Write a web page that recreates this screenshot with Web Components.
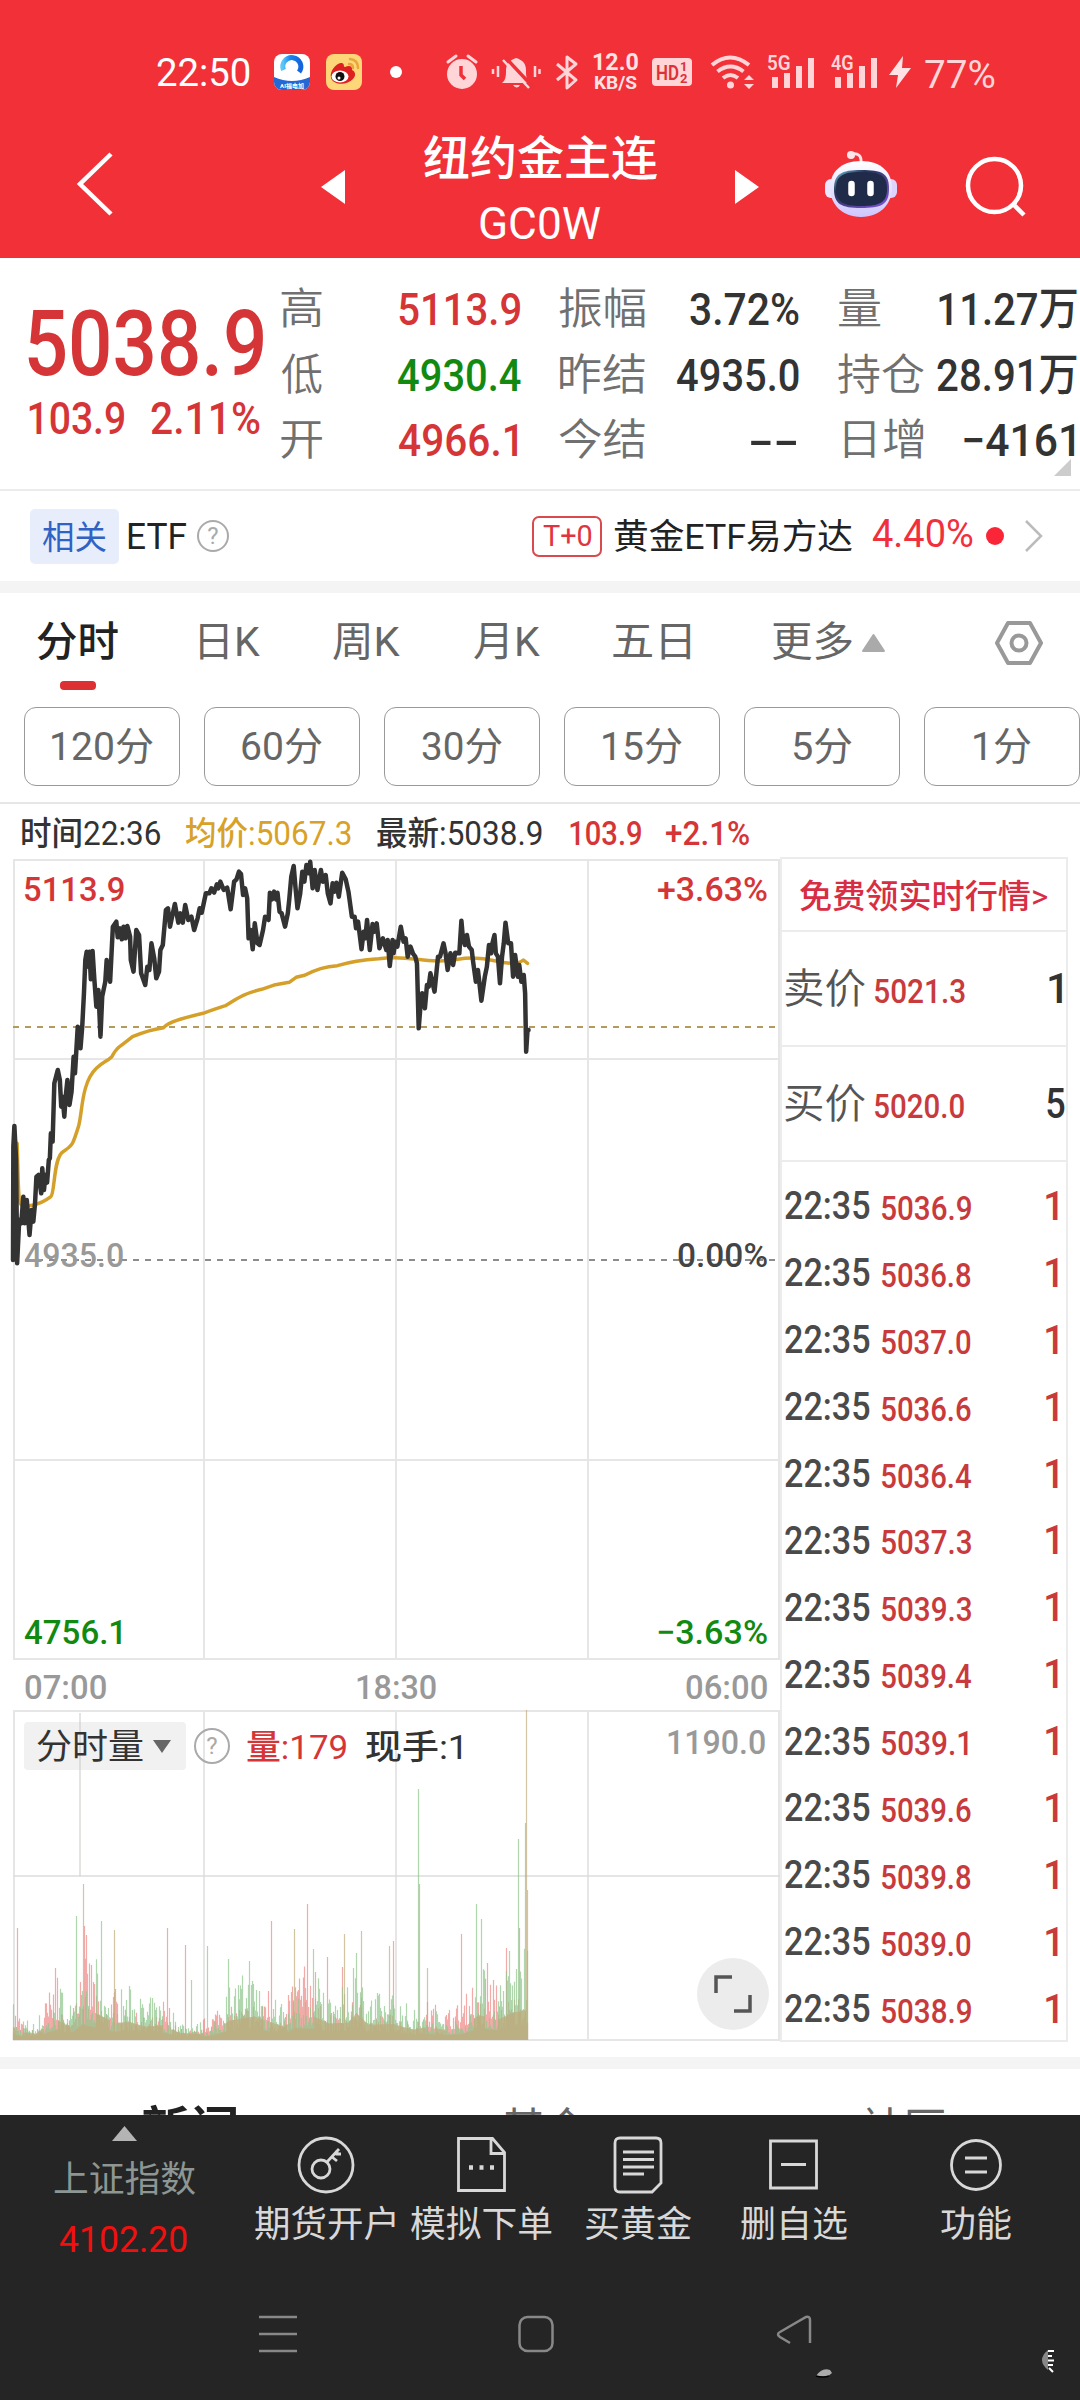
<!DOCTYPE html>
<html lang="zh-CN">
<head>
<meta charset="utf-8">
<title>纽约金主连</title>
<style>
  body {
    margin: 0;
    width: 1080px;
    height: 2400px;
    overflow: hidden;
    background: #fff;
    color: #333;
    font-family: Roboto, "Noto Sans CJK SC", sans-serif;
  }
</style>
</head>
<body>
<quote-page></quote-page>

<script>
const FONT = 'Roboto, "Noto Sans CJK SC", sans-serif';
const pen = document.createElement("canvas").getContext("2d");

// Text condensed or widened to an exact width, like the DIN-style numerals of the app.
class FitText extends HTMLElement {
  connectedCallback() {
    const width = Number(this.getAttribute("w"));
    const size = Number(this.getAttribute("size") || 40);
    const weight = this.getAttribute("weight") || 400;
    const shadow = this.attachShadow({ mode: "open" });

    pen.font = `${weight} ${size}px ${FONT}`;
    const m = pen.measureText(this.textContent);
    const scale = width / (m.actualBoundingBoxLeft + m.actualBoundingBoxRight);

    shadow.innerHTML = `
      <style>
        :host {
          display: block;
          flex: none;
          width: ${width}px;
          height: ${size}px;
          line-height: ${size}px;
          font-size: ${size}px;
          font-weight: ${weight};
          white-space: nowrap;
        }
        span {
          display: inline-block;
          transform-origin: 0 50%;
          transform: translateX(${m.actualBoundingBoxLeft * scale}px) scaleX(${scale});
        }
      </style>
      <span><slot></slot></span>
    `;
  }
}
customElements.define("fit-text", FitText);

// t(text, width, size, left gap, colour, weight, extra css)
const t = (text, w, size, gap = 0, color = "inherit", weight = 400, css = "") =>
  `<fit-text w="${w}" size="${size}" weight="${weight}" style="margin-left:${gap}px;color:${color};${css}">${text}</fit-text>`;

// svg(width, height, left gap, content, attributes)
const svg = (w, h, gap, content, attrs = "") =>
  `<svg width="${w}" height="${h}" viewBox="0 0 ${w} ${h}" style="margin-left:${gap}px" fill="none" ${attrs}>${content}</svg>`;

const define = (name, css, html) =>
  customElements.define(name, class extends HTMLElement {
    connectedCallback() {
      this.attachShadow({ mode: "open" }).innerHTML = `
        <style>
          :host, * { box-sizing: border-box; }
          svg { display: block; flex: none; overflow: visible; }
          .row { display: flex; align-items: center; }
          ${css}
        </style>
        ${html}`;
    }
  });

const RED = "#d63537";
const GREEN = "#128a12";
const INK = "#333";
const GREY = "#666";

const bars = `<path d="M0 34V23h6v11zM12 34V19h6v15zM24 34V12h6v22zM36 34V4h6v30z" fill="#ffd5d8"/>`;

define("status-bar", `
  :host { display: flex; align-items: center; height: 144px; color: #fff; }
  .speed { margin-left: 15px; width: 45px; padding-top: 1px; }
  .net { display: grid; }
  .net > * { grid-area: 1 / 1; }
`, `
  ${t("22:50", 93, 38, 157, "#fff", 400, "margin-top:2px")}
  ${svg(36, 36, 24, `
    <defs><clipPath id="a"><rect width="36" height="36" rx="8"/></clipPath>
    <linearGradient id="g"><stop stop-color="#5cc8f8"/><stop offset=".4" stop-color="#1a86f0"/><stop offset="1" stop-color="#1464dd"/></linearGradient></defs>
    <g clip-path="url(#a)"><rect width="36" height="36" fill="#fff"/>
    <path d="M0 23Q18 31 36 23V36H0z" fill="#2468d6"/></g>
    <path d="M9.500 16A9 9 0 1 1 25 18" stroke="url(#g)" stroke-width="5"/>
    <text x="18" y="34" font-size="6" font-weight="700" fill="#fff" text-anchor="middle">AI福电加</text>`)}
  ${svg(36, 36, 16, `
    <rect width="36" height="36" rx="8" fill="#fcd678"/>
    <path d="M5 24C3 16 12 8 16 9c3 1 1 4 3 4 4-2 8-1 7 3 4 2 4 6 1 9-6 7-20 6-22-1z" fill="#df2020"/>
    <ellipse cx="14" cy="22.500" rx="8.500" ry="6" fill="#fff"/>
    <circle cx="14" cy="22.500" r="4.500" fill="#111"/><circle cx="13" cy="24" r="1.500" fill="#fff"/>
    <path d="M24 5q8 1 8 9M23 10q4 0 4 4" stroke="#e9a63a" stroke-width="2.500" stroke-linecap="round"/>`)}
  ${svg(12, 12, 28, `<circle cx="6" cy="6" r="6" fill="#fff"/>`)}
  ${svg(34, 36, 43, `
    <circle cx="17" cy="20" r="15" fill="#ffd5d8"/>
    <path d="M3 8l8-6M31 8l-8-6" stroke="#ffd5d8" stroke-width="3" stroke-linecap="round"/>
    <path d="M16 12v9l4 4" stroke="#ef3038" stroke-width="3.500"/>`)}
  ${svg(48, 34, 13, `
    <path d="M10 28c4-3 4-8 4-13 0-6 4-10 10-12 7 2 10 6 10 12 0 5 0 10 4 13zM21 30h7q-3 5-7 0z" fill="#ffd5d8"/>
    <path d="M13 2l29 31" stroke="#ef3038" stroke-width="3.500"/>
    <path d="M11 5l26 28M1 14v5M6 11v11M43 11v11M47.500 14v5" stroke="#ffd5d8" stroke-width="2.500"/>`)}
  ${svg(22, 34, 16, `<path d="M1 9l19 16-9 8V2l9 7L1 25" stroke="#ffd5d8" stroke-width="3" stroke-linejoin="round"/>`)}
  <div class="speed">
    ${t("12.0", 45, 24, 0, "#ffe3e4", 700, "height:20px;line-height:20px")}
    ${t("KB/S", 42, 18, 2, "#ffe3e4", 700, "height:21px;line-height:21px")}
  </div>
  ${svg(40, 28, 14, `
    <rect width="40" height="28" rx="4" fill="#ffd5d8"/>
    <text x="4" y="22" font-size="21" font-weight="600" fill="#dd3038" textLength="23" lengthAdjust="spacingAndGlyphs">HD</text>
    <text x="28" y="13" font-size="13" font-weight="700" fill="#dd3038">1</text>
    <text x="28" y="25" font-size="13" font-weight="700" fill="#dd3038">2</text>`)}
  ${svg(44, 34, 18, `
    <path d="M2 10q18-15 37 0M7.500 16.500q13-10 26 0M13 23q7.500-6 15 0" stroke="#ffd5d8" stroke-width="4"/>
    <circle cx="20.500" cy="30" r="3.500" fill="#ffd5d8"/><path d="M34 25l5-5 5 5zM34 29h10l-5 5z" fill="#ffd5d8"/>`)}
  <div class="net" style="margin-left:14px">${svg(46, 34, 0, `<g transform="translate(4 -1)">${bars}</g>`)}${t("5G", 22, 20, 0, "#ffd5d8", 600, "margin-top:-2px")}</div>
  <div class="net" style="margin-left:17px">${svg(46, 34, 0, `<g transform="translate(4 -1)">${bars}</g>`)}${t("4G", 22, 20, 0, "#ffd5d8", 600, "margin-top:-2px")}</div>
  ${svg(24, 34, 11, `<path d="M15 1L1 20h9L8 33 23 13h-9z" fill="#ffe3e4"/>`)}
  ${t("77%", 70, 38, 13, "#ffd5d8", 400, "margin-top:5px")}
`);

define("title-bar", `
  :host { display: flex; height: 114px; color: #fff; }
  .names { margin-left: 78px; width: 234px; display: flex; flex-direction: column; align-items: center; }
`, `
  ${svg(38, 64, 76, `<path d="M35 2L4 32l31 30" stroke="#fff" stroke-width="4.500"/>`, 'id="back"')}
  ${svg(24, 34, 207, `<path d="M24 0v34L0 17z" fill="#fff"/>`)}
  <div class="names">
    ${t("纽约金主连", 233, 47, 0, "#fff", 500, "margin-top:-9px")}
    ${t("GC0W", 121, 44, 0, "#fff", 400, "margin-top:20px")}
  </div>
  ${svg(24, 34, 78, `<path d="M0 0v34l24-17z" fill="#fff"/>`)}
  ${svg(72, 68, 66, `
    <defs>
      <linearGradient id="h" x2="0" y2="1"><stop stop-color="#fff"/><stop offset="1" stop-color="#cfc5ff"/></linearGradient>
      <linearGradient id="v" x2="1" y2="1"><stop stop-color="#75c9df"/><stop offset=".3" stop-color="#24345c"/><stop offset="1" stop-color="#8552dc"/></linearGradient>
    </defs>
    <path d="M26 4q11-2 10 9" stroke="#ffe4e8" stroke-width="3"/><circle cx="26" cy="5" r="4" fill="#ffe4e8"/>
    <rect y="29" width="14" height="19" rx="6" fill="#ebe6ff"/><rect x="58" y="29" width="14" height="19" rx="6" fill="#ddd5ff"/>
    <path d="M36 11c21 0 31 12 31 27S56 67 36 67 5 53 5 38s10-27 31-27z" fill="url(#h)"/>
    <path d="M36 20c21 0 28 3 28 19S56 58 36 58 9 54 9 39s7-19 27-19z" fill="url(#v)"/>
    <path d="M36 22c19 0 26 3 26 17S54 56 36 56 11 52 11 39s6-17 25-17z" fill="#202b49"/>
    <path d="M26.500 34v9M45.500 34v9" stroke="#fff" stroke-width="6.500" stroke-linecap="round"/>`, 'class="bot"')}
  ${svg(60, 60, 69, `<circle cx="28.500" cy="28.500" r="26.500" stroke="#fff" stroke-width="4.500"/><path d="M48 48l10 10" stroke="#fff" stroke-width="4.500"/>`, 'class="find"')}
  <style>
    svg { margin-top: 26px; }
    #back { margin-top: 8px; }
    .bot { margin-top: 6px; }
    .find { margin-top: 13px; }
  </style>
`);

const cell = (label, lw, value, vw, color = INK, inset = 0, tail = 0) =>
  `<div class="cell row" style="padding:0 ${tail}px 0 ${inset}px">${t(label, lw, 43, 0, "#707070", 350)}${t(value, vw, 45, 0, color, 500)}</div>`;

define("quote-summary", `
  :host { display: flex; height: 233px; border-bottom: 2px solid #ececec; }
  .price { width: 280px; padding: 42px 0 0 28px; }
  .change { margin-top: 6px; }
  .stats { display: grid; width: 800px; grid-template-columns: 241px 240px 240px; column-gap: 38px; grid-template-rows: repeat(3, 65.500px); padding-top: 19px; }
  .cell { justify-content: space-between; }
  .corner { margin: 201px 0 0 -26px; }
`, `
  <div class="price">
    ${t("5038.9", 235, 90, 0, RED, 500)}
    <div class="change row">${t("103.9", 95, 45, 1, RED, 500)}${t("2.11%", 109, 45, 27, RED, 500)}</div>
  </div>
  <div class="stats">
    ${cell("高", 41, "5113.9", 121, RED, 1, 1)}${cell("振幅", 86, "3.72%", 109)}${cell("量", 42, "11.27万", 138, INK, 2)}
    ${cell("低", 41, "4930.4", 123, GREEN, 1)}${cell("昨结", 85, "4935.0", 122, INK, 1)}${cell("持仓", 86, "28.91万", 140, INK, 1)}
    ${cell("开", 41, "4966.1", 118, RED, 1, 4)}${cell("今结", 86, "--", 47, INK, 0, 2)}${cell("日增", 79, "−4161", 110, INK, 7, 3)}
  </div>
  <div class="corner">${svg(17, 17, 0, `<path d="M17 0v17H0z" fill="#ccc"/>`)}</div>
`);

define("help-mark", `
  :host { display: grid; place-items: center; width: 32px; height: 32px; border: 2px solid #aaa; border-radius: 50%; color: #aaa; font-size: 24px; line-height: 1; flex: none; }
`, `<span>?</span>`);

define("related-etf", `
  :host { display: flex; align-items: center; height: 102px; border-bottom: 12px solid #f4f4f4; }
  .tag { margin-left: 30px; width: 89px; height: 55px; border-radius: 5px; background: #e7edfa; }
  .day { margin-left: 303px; width: 70px; height: 41px; border: 2px solid #d84a4e; border-radius: 7px; }
  help-mark { margin-left: 11px; }
`, `
  <div class="tag row">${t("相关", 64, 33, 12, "#2f62c4", 400, "margin-top:2px")}</div>
  ${t("ETF", 58, 36, 9, "#222", 400, "margin-top:2px")}
  <help-mark></help-mark>
  <div class="day row">${t("T+0", 49, 30, 9, "#e23340")}</div>
  ${t("黄金ETF易方达", 238, 35, 12, "#222", 400, "margin-top:3px")}
  ${t("4.40%", 101, 38, 20, "#f0303c", 400, "margin-top:-4px")}
  ${svg(18, 18, 13, `<circle cx="9" cy="9" r="9" fill="#fa2638"/>`)}
  ${svg(18, 32, 21, `<path d="M1 1l15 15L1 31" stroke="#bbb" stroke-width="2.500"/>`)}
`);

define("period-tabs", `
  :host { display: block; height: 211px; border-bottom: 2px solid #e6e6e6; }
  .tabs { height: 88px; padding-top: 11px; }
  .mark { width: 36px; height: 9px; margin-left: 60px; border-radius: 4px; background: #dc3035; }
  .minutes { display: flex; gap: 24px; margin: 17px 0 0 24px; }
  .minutes div { flex: none; width: 156px; height: 79px; padding-top: 2px; border: 1.500px solid #999; border-radius: 12px; display: flex; align-items: center; justify-content: center; }
`, `
  <div class="tabs row">
    ${t("分时", 81, 41, 37, "#222", 500)}
    ${t("日K", 60, 41, 82, GREY)}
    ${t("周K", 67, 41, 73, GREY)}
    ${t("月K", 66, 41, 74, GREY)}
    ${t("五日", 78, 41, 73, GREY)}
    ${t("更多", 80, 41, 81, GREY)}
    ${svg(23, 18, 10, `<path d="M11.500 1L22 17H1z" fill="#aaa" stroke="#aaa" stroke-width="2" stroke-linejoin="round"/>`)}
    ${svg(48, 44, 110, `<path d="M13 2h22l11 20-11 20H13L2 22z" stroke="#999" stroke-width="4" stroke-linejoin="round"/><circle cx="24" cy="22" r="7.500" stroke="#999" stroke-width="4"/>`)}
  </div>
  <div class="mark"></div>
  <div class="minutes">
    ${[["120分", 101], ["60分", 80], ["30分", 80], ["15分", 79], ["5分", 59], ["1分", 57]]
      .map(([text, w]) => `<div>${t(text, w, 39, 0, GREY)}</div>`).join("")}
  </div>
`);

define("chart-legend", `
  :host { display: flex; align-items: center; height: 55px; padding-top: 3px; }
`, `
  ${t("时间22:36", 138, 33, 22, INK, 450)}
  ${t("均价:5067.3", 165, 33, 26, "#d8a127", 450)}
  ${t("最新:5038.9", 165, 33, 26, INK, 450)}
  ${t("103.9", 71, 33, 28, RED, 500)}
  ${t("+2.1%", 83, 33, 25, RED, 500)}
`);

const PRICE = `38,1230 39,890 42,828 47,930 50,1240 56,1110 62,1120 68,1040 72,1120 78,1050 86,1155 92,1080 97,1115
  102,1060 106,980 112,975 120,1030 123,955 128,1020 132,975 137,998 142,930 145,925 148,850 153,875 158,700 168,660 174,690
  178,770 182,740 187,800 191,740 196,690 202,765 208,725 214,620 218,670 222,600 226,530 234,595 239,530 244,430 248,330
  252,305 256,350 260,305 264,388 269,303 274,385 280,470 286,420 292,560 297,440 306,395 310,330 320,395 328,230
  338,215 342,262 349,235 354,268 359,230 365,265 370,228 378,260 380,330 388,365 396,240 404,255 410,370 422,405
  428,350 434,360 440,280 448,325 454,385 462,365 466,300 473,285 482,180 488,175 494,230 500,200 508,162 518,218
  524,190 531,218 538,165 547,210 556,200 564,240 574,205 580,175 586,188 598,130 608,130 614,115 622,128 630,103 634,115
  640,95 650,120 660,113 670,178 680,95 687,88 694,65 700,72 706,135 712,115 718,145 722,265 728,240 734,298 740,220
  748,280 754,285 764,240 770,200 780,210 784,128 790,148 796,125 802,148 806,128 812,185 818,190 828,230 836,190
  840,150 846,80 853,48 858,110 864,175 872,130 878,65 884,95 890,45 896,70 901,35 908,115 914,60 922,120 932,60
  938,95 946,75 952,130 960,160 966,100 972,125 977,98 984,140 994,68 1004,88 1012,125 1022,200 1030,200 1034,235
  1040,215 1050,298 1056,245 1061,265 1066,210 1074,300 1082,222 1088,245 1094,220 1102,295 1112,265 1122,300 1126,270
  1132,348 1140,270 1143,310 1148,275 1154,290 1164,230 1172,275 1178,265 1184,320 1192,290 1200,312 1206,320 1211,340
  1216,535 1221,470 1226,430 1234,475 1240,405 1245,410 1250,370 1262,425 1272,320 1278,320 1288,280 1294,310 1300,360
  1308,310 1316,345 1322,308 1334,310 1340,212 1344,260 1350,285 1356,255 1362,290 1370,300 1374,335 1382,395 1388,360
  1398,452 1408,380 1414,350 1420,285 1426,310 1430,280 1436,255 1440,310 1446,320 1452,400 1458,320 1463,280 1468,218
  1476,280 1484,280 1490,380 1496,315 1504,380 1508,345 1514,395 1521,375 1525,430 1528,605 1532,540 1535,540`;

const AVERAGE = `M50,880C54,1000 52,1060 62,1065S110,1070 148,1040C160,1030 155,920 184,905C210,885 210,890 228,830
  C240,790 235,700 280,655C300,635 310,635 325,620C340,590 350,590 385,560Q430,540 475,533C490,515 530,505 590,490
  Q630,475 655,467C690,445 710,430 760,418L800,404 840,397 860,382 885,376Q930,350 980,347Q1030,330 1100,326
  Q1150,320 1210,328Q1280,338 1330,328T1440,333T1520,330L1532,340`;

const gridLines = (h, rows) =>
  [1, 191, 383, 575, 766].map((x) => `M${x} 0V${h}`).join("") + rows.map((y) => `M0 ${y}H767`).join("");

define("price-chart", `
  :host { display: grid; width: 767px; height: 801px; }
  svg, .labels { grid-area: 1 / 1; }
  .labels { display: flex; flex-direction: column; padding: 13px 13px 11px 12px; }
  .labels .row { justify-content: space-between; height: 34px; }
`, `
  ${svg(767, 802, 0, `
    <path d="${gridLines(801, [1, 200, 601, 800])}" stroke="#e6e6e6" stroke-width="2"/>
    <path d="M0 168H767" stroke="#b59b5a" stroke-width="2" stroke-dasharray="6 6"/>
    <path d="M0 401H767" stroke="#8c8c8c" stroke-width="2" stroke-dasharray="6 6"/>
    <g transform="scale(.3444 .3333) translate(-38 -27)" stroke-linejoin="round" stroke-linecap="round">
      <path d="${AVERAGE}" stroke="#d5a02a" stroke-width="3.500" vector-effect="non-scaling-stroke"/>
      <polyline points="${PRICE}" stroke="#333" stroke-width="4.500" vector-effect="non-scaling-stroke"/>
    </g>`)}
  <div class="labels">
    <div class="row">${t("5113.9", 99, 34, 0, RED, 500)}${t("+3.63%", 109, 34, 0, RED, 500)}</div>
    <div class="row" style="margin-top:332px">${t("4935.0", 99, 34, -1, "#999", 500)}${t("0.00%", 89, 34, 0, "#444", 500)}</div>
    <div class="row" style="margin-top:343px">${t("4756.1", 97, 34, -1, GREEN, 500)}${t("−3.63%", 109, 34, 0, GREEN, 500)}</div>
  </div>
`);

define("time-axis", `
  :host { display: flex; align-items: center; justify-content: space-between; width: 767px; height: 50px; padding: 3px 13px 0 12px; }
`, `
  ${t("07:00", 81, 34, 0, "#999", 500)}${t("18:30", 79, 34, 0, "#999", 500)}${t("06:00", 81, 34, 0, "#999", 500)}
`);

// Volume: [x, height] knots of the usual level, then single peaks [x, height, colour].
const LEVEL = [[0, 40], [7, 26], [22, 18], [42, 66], [57, 40], [69, 100], [87, 76], [101, 54], [117, 56], [131, 42], [151, 46],
  [166, 22], [186, 18], [200, 32], [216, 60], [241, 74], [261, 52], [271, 40], [281, 78], [300, 74], [315, 52], [335, 54],
  [343, 84], [355, 48], [380, 50], [400, 32], [415, 42], [430, 32], [450, 40], [465, 78], [485, 64], [500, 86], [514, 95]];
const PEAKS = [[4, 112, "r"], [42, 72, "r"], [63, 124, "g"], [70, 156, "t"], [71, 114, "r"], [73, 105, "r"], [88, 119, "g"],
  [101, 110, "t"], [154, 112, "r"], [172, 95, "r"], [194, 94, "g"], [178, 60, "g"], [215, 81, "g"], [236, 79, "g"],
  [258, 119, "r"], [281, 111, "t"], [294, 136, "r"], [300, 91, "g"], [302, 68, "r"], [314, 83, "r"], [331, 106, "t"],
  [329, 73, "r"], [343, 87, "g"], [348, 109, "t"], [340, 72, "g"], [376, 94, "t"], [380, 99, "r"], [405, 251, "g"],
  [406, 156, "t"], [414, 72, "t"], [448, 106, "r"], [463, 136, "g"], [468, 121, "g"], [493, 92, "r"], [496, 89, "g"],
  [474, 77, "r"], [505, 201, "g"], [506, 112, "r"], [512, 217, "g"], [513, 330, "t"], [513, 197, "t"], [514, 150, "t"]];

// Stretches where buying (red) leads; selling (green) leads elsewhere.
const RED_RUNS = [[2, 9], [30, 44], [59, 82], [96, 104], [150, 158], [190, 212], [250, 256], [274, 300], [412, 422], [432, 460], [472, 484]];

function volumeBars() {
  const d = { r: "", g: "", t: "" };
  let seed = 7;
  const rnd = () => (seed = (seed * 16807) % 2147483647) / 2147483647;
  let k = 0;
  for (let x = 0; x < 515; x++) {
    while (k < LEVEL.length - 2 && LEVEL[k + 1][0] <= x) k++;
    const [x0, h0] = LEVEL[k];
    const [x1, h1] = LEVEL[k + 1];
    const level = h0 + ((h1 - h0) * (x - x0)) / (x1 - x0);
    const red = RED_RUNS.some(([a, b]) => x >= a && x <= b);
    for (const c of ["r", "g"]) {
      const lead = (c === "r") === red ? 1 : 0.55;
      const h = Math.max(4, lead * level * (0.3 + 0.7 * rnd() ** 2));
      d[c] += `M${x + 0.5} 330v-${h.toFixed(1)}`;
    }
    d.t += `M${x + 0.5} 330v-${(level * (red ? 0.15 : 0.32)).toFixed(1)}`;
  }
  for (const [x, h, c] of PEAKS) d[c] += `M${x + 0.5} 330v-${h}`;
  return `
    <path d="${d.r}" stroke="#ee8884" stroke-opacity=".7" stroke-width="1.200"/>
    <path d="${d.g}" stroke="#8fc58c" stroke-opacity=".7" stroke-width="1.200"/>
    <path d="${d.t}" stroke="#c0ab7c" stroke-opacity=".7" stroke-width="1.200"/>`;
}

define("volume-chart", `
  :host { display: grid; width: 767px; height: 331px; }
  .plot, .head, .full { grid-area: 1 / 1; }
  .head { height: 48px; margin-top: 12px; padding-left: 11px; }
  .pick { width: 162px; height: 48px; border-radius: 4px; background: #f1f1f1; }
  help-mark { width: 36px; height: 36px; margin-left: 8px; }
  .full { place-self: end; display: grid; place-items: center; width: 72px; height: 72px; margin: 0 11px 11px 0; border-radius: 50%; background: #ececec; }
`, `
  <div class="plot">${svg(767, 331, 0, `
    <path d="${gridLines(331, [1, 330])}" stroke="#e6e6e6" stroke-width="2"/>
    <path d="M0 166H767" stroke="#dcdcdc" stroke-width="1.500"/>
    ${volumeBars()}`)}</div>
  <div class="head row">
    <div class="pick row">
      ${t("分时量", 106, 35, 13, "inherit", 400, "margin-top:3px")}
      ${svg(18, 13, 10, `<path d="M0 0h18L9 13z" fill="#666"/>`)}
    </div>
    <help-mark></help-mark>
    ${t("量:179", 99, 34, 17, RED, 450, "margin-top:2px")}
    ${t("现手:1", 96, 34, 20, INK, 450, "margin-top:2px")}
    ${t("1190.0", 97, 34, 206, "#999", 500, "margin-top:-9px")}
  </div>
  ${svg(767, 331, 0, `<path d="M67 3V166" stroke="#c9c9c5" stroke-width="1"/>`, 'class="plot"')}
  <div class="full">${svg(38, 38, 0, `<path d="M2 18V2h16M36 20v16H20" stroke="#555" stroke-width="3.500"/>`)}</div>
`);

const ticks = ["5036.9", "5036.8", "5037.0", "5036.6", "5036.4", "5037.3", "5039.3", "5039.4", "5039.1", "5039.6", "5039.8", "5039.0", "5038.9"];

define("order-list", `
  :host { display: block; width: 288px; height: 1185px; border: 2px solid #ececec; margin-top: -2px; }
  .promo { height: 73px; border-bottom: 2px solid #ececec; padding-top: 4px; }
  .offer { height: 115px; border-bottom: 2px solid #ececec; }
  .ticks { padding-top: 11px; }
  .tick { height: 66.900px; }
  .offer > :first-child { padding-top: 2px; }
  .qty { margin-left: auto; }
`, `
  <div class="promo row">${t("免费领实时行情>", 247, 33, 18, "#d82e44", 450)}</div>
  <div class="offer row"><div>${t("卖价", 80, 41, 3, "#555", 350)}</div>${t("5021.3", 90, 34, 10, "#c83a3c", 500, "margin-top:5px")}<div class="qty">${t("1", 13, 42, 0, INK, 500, "margin-right:4px")}</div></div>
  <div class="offer row"><div>${t("买价", 80, 41, 3, "#555", 350)}</div>${t("5020.0", 89, 34, 10, "#c83a3c", 500, "margin-top:4px")}<div class="qty">${t("5", 18, 42, 0, INK, 500, "margin-right:1px")}</div></div>
  <div class="ticks">
    ${ticks.map((p) => `<div class="tick row">${t("22:35", 85, 38, 3, "#4a4a4a", 500)}${t(p, p.endsWith("1") ? 86 : 89, 33, 12, "#c83a3c", 500, "margin-top:4px")}<div class="qty">${t("1", 12, 41, 0, "#c83a3c", 500, "margin-right:8px")}</div></div>`).join("")}
  </div>
`);

define("news-tabs", `
  :host { display: block; height: 58px; border-top: 12px solid #f4f4f4; margin-top: 16px; overflow: hidden; }
  .row { padding-top: 37px; }
`, `
  <div class="row">${t("新闻", 94, 48, 142, "#222", 700)}${t("基金", 84, 44, 267, GREY)}${t("社区", 84, 44, 274, GREY)}</div>
`);

const action = (icon, label, w, x) => `<div class="action" style="width:${w}px;margin-left:${x}px">${icon}${t(label, w, 36, 0, "#d8d8d8")}</div>`;

define("action-bar", `
  :host { display: flex; height: 160px; background: #252525; }
  .index { width: 142px; margin-left: 53px; padding-top: 11px; display: flex; flex-direction: column; align-items: center; }
  .action { display: flex; flex-direction: column; align-items: center; gap: 13px; padding-top: 21px; flex: none; }
`, `
  <div class="index">
    ${svg(25, 15, 0, `<path d="M12.500 0L25 15H0z" fill="#b4b4b4"/>`)}
    ${t("上证指数", 141, 36, 0, "#8d9693", 400, "margin-top:21px")}
    ${t("4102.20", 128, 36, -2, "#f01010", 400, "margin-top:24px")}
  </div>
  <style>.action svg { stroke: #d8d8d8; stroke-width: 2.800; margin: 0 !important; }</style>
  ${action(svg(58, 58, 0, `<circle cx="30" cy="29" r="27"/><circle cx="25" cy="33" r="9"/><path d="M31 26l12-13M36 21l5 4M41 14v4h4"/>`), "期货开户", 140, 60)}
  ${action(svg(49, 58, 0, `<path d="M1.500 2.500h34l12 14v38h-46zM34 2.500v15h14"/><path d="M12 31.500h4M22.500 31.500h4M33 31.500h4" stroke-width="4.500"/>`), "模拟下单", 141, 16)}
  ${action(svg(48, 58, 0, `<path d="M6 2h36q5 0 5 5v40l-9 9H6q-5 0-5-5V7q0-5 5-5z"/><path d="M9 16h31M9 23.500h31M9 31h31M9 38h21"/>`), "买黄金", 106, 33)}
  ${action(svg(49, 58, 0, `<path d="M.5 5h46v47h-46zM11 28.500h25"/>`), "删自选", 106, 50)}
  ${action(svg(52, 58, 0, `<circle cx="26" cy="29" r="24.500"/><path d="M15 22h22M15 36h22"/>`), "功能", 70, 94)}
`);

define("system-nav", `
  :host { display: flex; align-items: flex-start; height: 125px; padding-top: 40px; background: #252525; }
`, `
  ${svg(38, 38, 259, `<path d="M0 2h38M0 19h38M0 36h38" stroke="#888" stroke-width="2.500"/>`)}
  ${svg(36, 38, 221, `<rect x="1.500" y="2" width="33" height="34" rx="8" stroke="#888" stroke-width="2.500"/>`)}
  ${svg(280, 66, 222, `
    <path d="M14 28L4 22q-4-3 0-5L30 2q4-1 4 3v23" stroke="#888" stroke-width="2.500"/>
    <path d="M40 61q6-9 14-6l2 3-5 4z" fill="#aaa"/><path d="M40 61q7 2 13 0" stroke="#000" stroke-width="1.500"/>
    <path d="M272 35q-12 10 0 20z" fill="#888"/>
    <path d="M272 36h6M272 41h4M272 45.500h6M272 50h5M273 53l4 4" stroke="#fff" stroke-width="2"/>`)}
`);

define("quote-page", `
  :host { display: flex; flex-direction: column; height: 2400px; }
  :host > * { flex: none; }
  header { background: #f13038; height: 258px; }
  main { display: flex; padding-left: 13px; height: 1182px; }
  .charts { width: 767px; }
`, `
  <header><status-bar></status-bar><title-bar></title-bar></header>
  <quote-summary></quote-summary>
  <related-etf></related-etf>
  <period-tabs></period-tabs>
  <chart-legend></chart-legend>
  <main>
    <div class="charts">
      <price-chart></price-chart>
      <time-axis></time-axis>
      <volume-chart></volume-chart>
    </div>
    <order-list></order-list>
  </main>
  <news-tabs></news-tabs>
  <action-bar></action-bar>
  <system-nav></system-nav>
`);
</script>
</body>
</html>
